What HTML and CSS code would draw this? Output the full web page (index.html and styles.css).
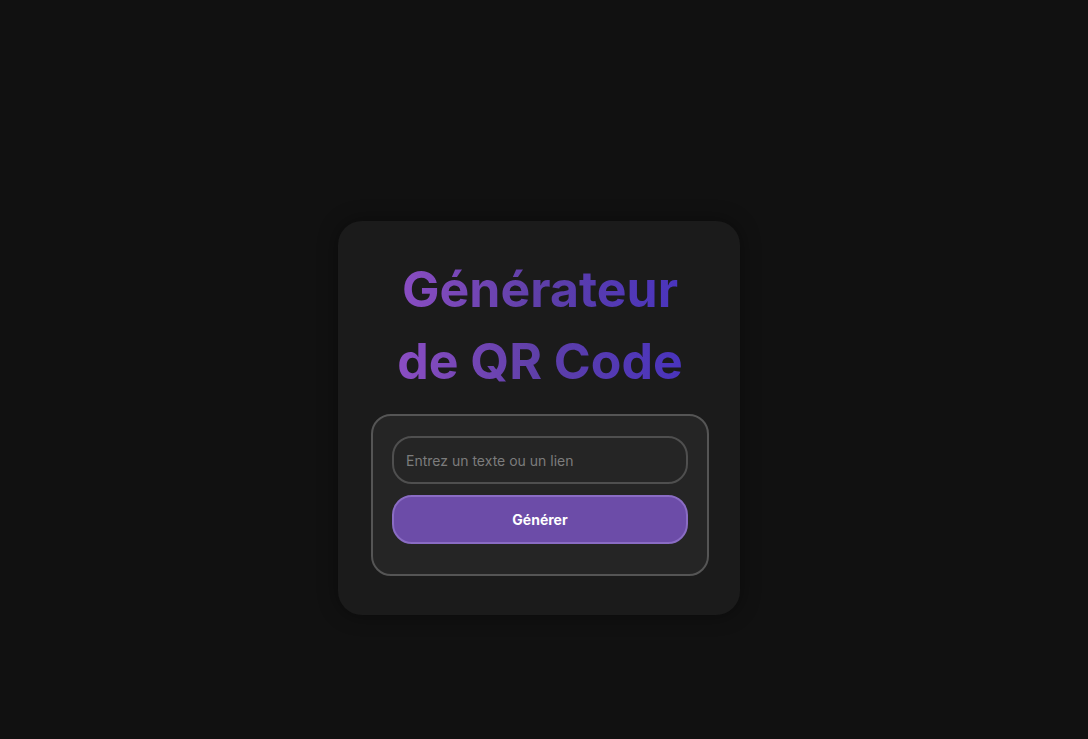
FILE: index.html
```html
<!DOCTYPE html>
<html lang="fr">
<head>
<meta charset="utf-8">
<title>Générateur de QR Code</title>
<link rel="stylesheet" href="styles.css">
</head>
<body>
<main class="page">
  <section class="card">
    <h1 class="title">Générateur<br>de QR Code</h1>
    <div class="panel">
      <input class="field" type="text" placeholder="Entrez un texte ou un lien">
      <button class="btn" type="button">Générer</button>
    </div>
  </section>
</main>
</body>
</html>
```
FILE: styles.css
```css
* { box-sizing: border-box; }
html, body { margin: 0; padding: 0; }
body {
  background: #111111;
  font-family: "Inter", "Open Sans", sans-serif;
  color: #fff;
}
.page {
  min-height: 739px;
  padding-top: 221px;
  display: flex;
  align-items: flex-start;
  justify-content: center;
}
.card {
  width: 402px;
  background: #1b1b1b;
  border-radius: 24px;
  padding: 32px 31px 39px 33px;
  box-shadow: 0 0 20px rgba(0,0,0,0.4);
  margin-right: 10px;
}
.title {
  margin: 0 0 17px;
  text-align: center;
  font-size: 50px;
  line-height: 72px;
  font-weight: 700;
  letter-spacing: 0;
  background: linear-gradient(90deg, #9350c8 0%, #5e3fa8 50%, #4632c2 100%);
  -webkit-background-clip: text;
  background-clip: text;
  color: transparent;
}
.panel {
  border: 2px solid #555555;
  border-radius: 20px;
  background: #252525;
  padding: 20px 19px 30px 19px;
  display: flex;
  flex-direction: column;
  gap: 11px;
}
.field {
  height: 48px;
  width: 100%;
  border: 2px solid #4f4f4f;
  border-radius: 20px;
  background: #252525;
  color: #ddd;
  padding: 0 12px;
  font-family: inherit;
  font-size: 14px;
  outline: none;
}
.field::placeholder { color: #7c7c7c; }
.btn {
  height: 49px;
  width: 100%;
  border: 2px solid #8a6cc4;
  border-radius: 20px;
  background: #6c4ca8;
  color: #fff;
  font-family: inherit;
  font-weight: 700;
  font-size: 14px;
}
```
